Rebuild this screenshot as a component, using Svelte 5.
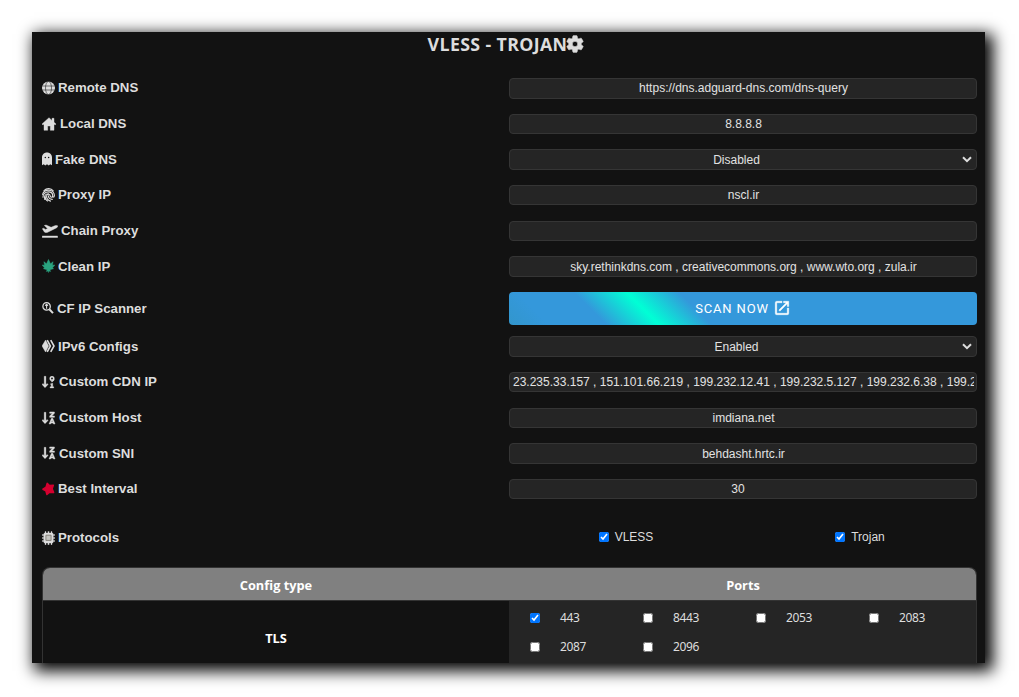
<script>
  const rows = [
    { icon: 'globe', w: 13, label: 'Remote DNS', value: 'https://dns.adguard-dns.com/dns-query' },
    { icon: 'house', w: 15, label: 'Local DNS', value: '8.8.8.8' },
    { icon: 'ghost', w: 10, label: 'Fake DNS', value: 'Disabled', kind: 'select' },
    { icon: 'finger', w: 13, label: 'Proxy IP', value: 'nscl.ir' },
    { icon: 'plane', w: 16, label: 'Chain Proxy', value: '' },
    { icon: 'leaf', w: 13, label: 'Clean IP', value: 'sky.rethinkdns.com , creativecommons.org , www.wto.org , zula.ir' },
    { icon: 'search', w: 12, label: 'CF IP Scanner', kind: 'button' },
    { icon: 'hive', w: 13, label: 'IPv6 Configs', value: 'Enabled', kind: 'select' },
    { icon: 'sortnum', w: 14, label: 'Custom CDN IP', value: '23.235.33.157 , 151.101.66.219 , 199.232.12.41 , 199.232.5.127 , 199.232.6.38 , 199.232.7.41' },
    { icon: 'sortaz', w: 14, label: 'Custom Host', value: 'imdiana.net' },
    { icon: 'sortaz', w: 14, label: 'Custom SNI', value: 'behdasht.hrtc.ir' },
    { icon: 'star', w: 13, label: 'Best Interval', value: '30', kind: 'number' }
  ];
  const ports = [
    ['443', true], ['8443', false], ['2053', false], ['2083', false],
    ['2087', false], ['2096', false]
  ];
</script>

{#snippet glyph(name, w)}
  <svg class="icon" width={w} height="14" viewBox="0 0 {w} 14" fill="#ddd" stroke="none">
    {#if name === 'globe'}
      <circle cx="6.5" cy="7" r="6.5" />
      <g fill="none" stroke="#121212" stroke-width=".55"><ellipse cx="6.5" cy="7" rx="3" ry="6.6" /><path d="M0 5h13M0 9h13" /></g>
    {:else if name === 'house'}
      <path d="M7 .7 0 7l.9 1L2 7.1V13.3h3.7V9h2.6v4.3H12V7.1l1.1.9.9-1-2-1.8V1.3h-2v2.1z" stroke="#ddd" stroke-width=".4" />
    {:else if name === 'ghost'}
      <path d="M5 .5C2 .5 0 2.800 0 5.400v7.800l1.700-1 1.600 1.300L5 12.200l1.700 1.300 1.600-1.300 1.700 1V5.400C10 2.800 8 .5 5 .5z" />
      <circle cx="3.300" cy="5.500" r=".75" fill="#121212" /><circle cx="6.600" cy="5.500" r=".75" fill="#121212" />
    {:else if name === 'finger'}
      <g fill="none" stroke="#ddd" stroke-width="1.15" stroke-linecap="round">
        <path d="M2 2.6C4.700-.1 9 0 11.200 2.800" />
        <path d="M.6 6.400C1.300 3.600 3.900 2.100 6.500 2.100c3.400 0 5.800 2.300 5.900 5.400 0 1-.5 1.600-1.400 1.600" />
        <path d="M1 9.200C.8 5.900 3.200 3.900 6.500 3.900c2.400 0 4.100 1.500 4.200 3.600.1 2.300-2.300 2.200-2.500.5-.2-2.400-3.400-2.400-3.600 0-.1 2.400 1.300 4.300 3.900 5.100" />
        <path d="M2.800 11.500C1.600 7.800 3.700 5.700 6.400 5.700M6.400 7.700c0 2.200 1.400 3.700 4 3.600M5.600 13C4 12 3 10.200 3 8" />
      </g>
    {:else if name === 'plane'}
      <path d="M.2 12h15.400v1.500H.2zM.3 4.700l1.400-.5 1.700 1.200 2.200-.8L2.300 1.500 4 1l5.100 2.300 3.600-1.500c1.200-.5 2.700-.5 3 .1.300.8-.6 1.700-1.900 2.300L6.200 8C4.700 8.700 3.200 8.800 2.400 8z" stroke="#ddd" stroke-width=".4" />
    {:else if name === 'leaf'}
      <path fill="#2aa480" stroke="#2aa480" stroke-width=".5" d="M6.500.5 8.500 4.800l2.600-2.100-.7 3.500 2.400-.2-2.200 2.800.9.900-3.700 1 .8 1.700-1.800-.5-.3 1.600-.3-1.600-1.800.5.800-1.700-3.700-1 .9-.9L.2 6l2.400.2-.7-3.500 2.600 2.100z" />
    {:else if name === 'search'}
      <g fill="none" stroke="#ddd"><circle cx="4.600" cy="5.400" r="3.700" stroke-width="1.300" /><path d="m7.300 8.200 3.700 3.900" stroke-width="2" /><path d="M4.600 3.200v4.500M3.200 4.700l1.400-1.400L6 4.700" stroke-width="1.100" /></g>
    {:else if name === 'hive'}
      <path d="M3.600 1 0 7l3.600 6 3-6z" stroke="#ddd" stroke-width=".4" />
      <g fill="none" stroke="#ddd" stroke-width="1.600"><path d="M5.200 1.200 8.400 7l-3.200 5.800M8.700 1.200 12 7l-3.300 5.800" /></g>
    {:else if name === 'sortnum'}
      <path d="M2.200 1.300h1.700v8.400l1.200-1.300 1 1L3 12.800 0 9.400l1-1 1.200 1.300z" stroke="#ddd" stroke-width=".3" />
      <g stroke="#ddd" stroke-width=".4"><circle cx="10" cy="3.500" r="1.700" fill="none" stroke-width="1.600" /><path d="m9.300 6.800 1.600-2h1.400L10.200 7zM8.300 9l2.400-.7v3.500h1v1.100H8.100v-1.100h1.100V9.700z" /></g>
    {:else if name === 'sortaz'}
      <path d="M2.200 1.300h1.700v8.400l1.200-1.300 1 1L3 12.800 0 9.400l1-1 1.200 1.300z" stroke="#ddd" stroke-width=".3" />
      <path d="M7.700 1h4.700v1.200L9.800 5h2.600v1.300H7.700V5.100l2.600-2.800H7.700zM9.500 7.300h1.200l2.300 5.600h-1.500l-.3-.9H9l-.4.9H7.100zm.6 1.900-.6 1.700h1.200z" stroke="#ddd" stroke-width=".5" />
    {:else if name === 'star'}
      <path fill="#d5002f" stroke="#d5002f" stroke-width="1.600" stroke-linejoin="round" d="m5.200 1.400 2.100 2.200 4-.3-1.200 3.400 1.400 3.700-3.900-.3-2.700 2.300-1-3.500L1 7.200l3.100-2z" />
    {:else}
      <path d="M3 .5h1V2h1.900V.5h1.200V2H9V.5h1V2c.8 0 1.300.6 1.300 1.300v.2h1.500v1h-1.500v2h1.500v1h-1.500v2h1.500v1h-1.500c0 1-.5 1.600-1.300 1.600v1.700H9v-1.700H7.100v1.700H5.900v-1.700H4v1.700H3v-1.700c-.8 0-1.300-.6-1.300-1.600H.2v-1h1.500v-2H.2v-1h1.500v-2H.2v-1h1.500v-.2C1.700 2.600 2.200 2 3 2z" stroke="#ddd" stroke-width=".3" />
      <path d="M3.900 4.200h5.200v5.200H3.900z" fill="#c4c4c0" stroke="#77736b" stroke-width=".8" />
    {/if}
  </svg>
{/snippet}

<main class="page">
  <section class="panel">
    <h1>VLESS - TROJAN<svg width="20" height="20" viewBox="0 0 24 24" fill="#ddd"><path fill-rule="evenodd" d="M19.400 13a7.500 7.500 0 0 0 0-2l2.200-1.600a.5.5 0 0 0 .1-.7l-2-3.400a.5.5 0 0 0-.6-.3l-2.500 1a7 7 0 0 0-1.700-1l-.4-2.600a.5.5 0 0 0-.5-.4h-4a.5.5 0 0 0-.5.4L9.100 5a7 7 0 0 0-1.700 1L4.900 5a.5.5 0 0 0-.6.300l-2 3.400a.5.5 0 0 0 .1.700L4.600 11a7.500 7.500 0 0 0 0 2l-2.200 1.600a.5.5 0 0 0-.1.700l2 3.400c.1.200.4.300.6.300l2.500-1a7 7 0 0 0 1.700 1l.4 2.600c0 .2.200.4.500.4h4c.3 0 .5-.2.500-.4l.4-2.600a7 7 0 0 0 1.700-1l2.500 1c.2.100.5 0 .6-.3l2-3.400a.5.5 0 0 0-.1-.7zM12 15.300a3.300 3.300 0 1 1 0-6.600 3.300 3.300 0 0 1 0 6.600z" stroke="#ddd" stroke-width=".8" /></svg></h1>

    {#each rows as r}
      <div class="row" class:scan={r.kind === 'button'}>
        <div class="label">{@render glyph(r.icon, r.w)}<span>{r.label}</span></div>
        {#if r.kind === 'button'}
          <button>SCAN NOW
            <svg width="18" height="18" viewBox="0 0 24 24" fill="#fff"><path d="M19 19H5V5h7V3H5a2 2 0 0 0-2 2v14a2 2 0 0 0 2 2h14a2 2 0 0 0 2-2v-7h-2zM14 3v2h3.590l-9.830 9.830 1.410 1.410L19 6.410V10h2V3z" stroke="#fff" stroke-width=".5" /></svg>
          </button>
        {:else if r.kind === 'select'}
          <div class="field select"><span>{r.value}</span><svg width="10" height="7" viewBox="0 0 10 7" fill="none" stroke="#ddd" stroke-width="2"><path d="m1 1.200 4 3.900 4-3.900" /></svg></div>
        {:else}
          <input class="field" class:number={r.kind === 'number'} type="text" value={r.value} />
        {/if}
      </div>
    {/each}

    <div class="row protocols">
      <div class="label">{@render glyph('chip', 13)}<span>Protocols</span></div>
      <div class="checks">
        <label><input type="checkbox" checked />VLESS</label>
        <label><input type="checkbox" checked />Trojan</label>
      </div>
    </div>

    <div class="table">
      <div class="head">Config type</div>
      <div class="head">Ports</div>
      <div class="type">TLS</div>
      <div class="ports">
        {#each ports as [port, on]}
          <label><input type="checkbox" checked={on} />{port}</label>
        {/each}
      </div>
    </div>
  </section>
</main>

<style>
  :global(body) { margin: 0; background: #fff; }
  * { box-sizing: border-box; }
  .page { height: 697px; padding: 32px 0 0 32px; overflow: hidden; background: #fff; }
  .panel {
    width: 953px; height: 631px; padding: 0 8px 0 10px;
    background: #121212; color: #ddd; font-family: "Liberation Sans", Arial, sans-serif;
    box-shadow: 5px 5px 15px 3px #000;
  }
  h1 {
    display: flex; justify-content: center; align-items: center; height: 46px; margin: 0;
    padding: 0 6px 22px 0; font: 700 17.800px "Open Sans", "Noto Sans", sans-serif; letter-spacing: .35px;
  }
  h1 svg { margin-left: -2px; flex: none; }
  .row { display: grid; grid-template-columns: 467px 468px; height: 20.500px; margin-bottom: 15.170px; align-items: center; }
  .label { display: flex; align-items: center; padding-bottom: .6px; font-size: 13.250px; font-weight: 700; white-space: pre; }
  .icon { flex: none; margin-right: 3px; }
  .field {
    width: 468px; height: 20.500px; padding: 0 2px 0 3px; border: 1px solid #353535; border-radius: 4px;
    background: #252525; color: #e2e2e2; font: 12px "Liberation Sans", Arial, sans-serif; text-align: center; outline: none;
  }
  .select { display: flex; align-items: center; padding: 0 4px 0 1px; }
  .select span { flex: 1; }
  .number { padding-right: 13px; }
  .scan { height: 33px; margin-bottom: 11.400px; }
  button {
    display: flex; align-items: center; justify-content: center; gap: 4px; width: 468px; height: 33px;
    padding: 0; border: 0; border-radius: 4px; color: #fff; font: 400 13px Roboto, sans-serif; letter-spacing: .85px;
    background: linear-gradient(45deg, #3296cc 0, #3498db 8%, #3498db 19.500%, #00ffd5 30%, #3498db 40.500%);
  }
  .protocols { height: 20px; margin: 27.500px 0 20px; }
  .protocols .label { padding: 2px 0 0; }
  .checks { display: grid; grid-template-columns: 1fr 1fr; font-size: 12px; }
  .checks label { display: flex; align-items: center; justify-content: center; }
  .checks input { width: 10px; height: 10px; margin: 1px 6px 0 0; }
  .table {
    display: grid; grid-template-columns: 466px 468px; grid-template-rows: 33px 1fr; height: 96px;
    width: 935px; border: 1px solid #333; border-bottom: 0; border-radius: 8px 8px 0 0; overflow: hidden;
    font-family: "Open Sans", "Noto Sans", sans-serif;
  }
  .head, .type { display: flex; align-items: center; justify-content: center; color: #fff; font-size: 12.800px; font-weight: 700; }
  .head { padding-top: 2px; background: #808080; border-bottom: 1px solid #333; }
  .type { padding-top: 13px; }
  .ports { display: grid; grid-template-columns: repeat(4, 113px); grid-auto-rows: 29px; padding: 2px 0 0 21px; background: #252525; }
  .ports label { display: flex; align-items: center; font: 12px "Noto Sans", sans-serif; letter-spacing: -.4px; }
  .ports input { width: 10px; height: 10px; margin: 2px 20px 0 0; }
</style>
